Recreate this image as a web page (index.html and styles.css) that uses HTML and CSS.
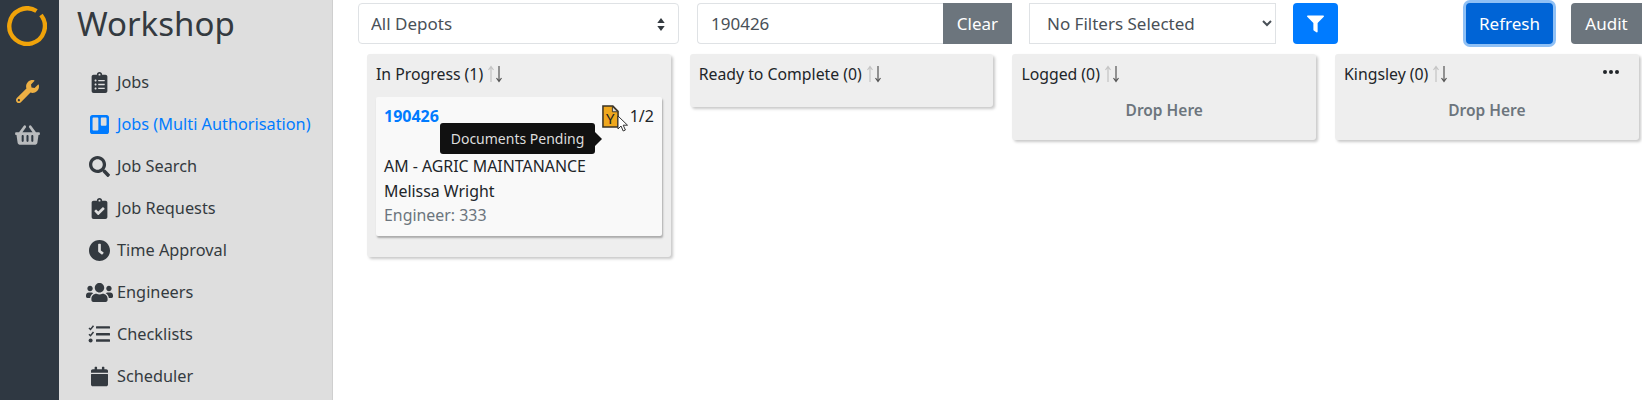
FILE: index.html
```html
<!DOCTYPE html>
<html lang="en">
<head>
<meta charset="utf-8">
<title>Workshop</title>
<link rel="stylesheet" href="styles.css">
</head>
<body>
<div class="app">
  <aside class="rail">
    <svg class="logo" viewBox="0 0 40 40"><path d="M29.500 5A17.800 17.800 0 1 0 34 9" fill="none" stroke="#f0a30a" stroke-width="4.400"/></svg>
    <svg class="rail-wrench" viewBox="0 0 512 512"><path d="M507.73 109.1c-2.24-9.03-13.54-12.09-20.12-5.51l-74.36 74.36-67.88-11.31-11.31-67.88 74.36-74.36c6.62-6.62 3.43-17.9-5.66-20.16-47.38-11.74-99.55.91-136.58 37.93-39.64 39.64-50.55 97.1-34.05 147.2L18.74 402.76c-24.99 24.99-24.99 65.51 0 90.5 24.99 24.99 65.51 24.99 90.5 0l213.21-213.21c50.12 16.71 107.47 5.68 147.37-34.22 37.07-37.07 49.7-89.32 37.91-136.73zM64 472c-13.25 0-24-10.75-24-24 0-13.26 10.75-24 24-24s24 10.74 24 24c0 13.25-10.75 24-24 24z"/></svg>
    <svg class="rail-basket" viewBox="0 0 576 512"><path d="M576 216v16c0 13.255-10.745 24-24 24h-8l-26.113 182.788C514.509 462.435 494.257 480 470.37 480H105.63c-23.887 0-44.139-17.565-47.518-41.212L32 256h-8c-13.255 0-24-10.745-24-24v-16c0-13.255 10.745-24 24-24h67.341l106.78-146.821c10.395-14.292 30.407-17.453 44.701-7.058 14.293 10.395 17.453 30.408 7.058 44.701L170.477 192h235.046L326.12 82.821c-10.395-14.292-7.234-34.306 7.059-44.701 14.291-10.395 34.306-7.235 44.701 7.058L484.659 192H552c13.255 0 24 10.745 24 24zM312 392V280c0-13.255-10.745-24-24-24s-24 10.745-24 24v112c0 13.255 10.745 24 24 24s24-10.745 24-24zm112 0V280c0-13.255-10.745-24-24-24s-24 10.745-24 24v112c0 13.255 10.745 24 24 24s24-10.745 24-24zm-224 0V280c0-13.255-10.745-24-24-24s-24 10.745-24 24v112c0 13.255 10.745 24 24 24s24-10.745 24-24z"/></svg>
  </aside>

  <nav class="sidebar">
    <h1 class="title">Workshop</h1>
    <ul class="menu">
      <li class="item"><span class="ico"><svg class="i-clip" viewBox="0 0 384 512"><path d="M336 64h-80c0-35.3-28.7-64-64-64s-64 28.7-64 64H48C21.5 64 0 85.5 0 112v352c0 26.5 21.5 48 48 48h288c26.5 0 48-21.5 48-48V112c0-26.5-21.5-48-48-48zM96 424c-13.3 0-24-10.7-24-24s10.7-24 24-24 24 10.7 24 24-10.7 24-24 24zm0-96c-13.3 0-24-10.7-24-24s10.7-24 24-24 24 10.7 24 24-10.7 24-24 24zm0-96c-13.3 0-24-10.7-24-24s10.7-24 24-24 24 10.7 24 24-10.7 24-24 24zm96-192c13.3 0 24 10.7 24 24s-10.7 24-24 24-24-10.7-24-24 10.7-24 24-24zm128 368c0 4.4-3.6 8-8 8H168c-4.4 0-8-3.6-8-8v-16c0-4.4 3.6-8 8-8h144c4.4 0 8 3.6 8 8v16zm0-96c0 4.4-3.6 8-8 8H168c-4.4 0-8-3.6-8-8v-16c0-4.4 3.6-8 8-8h144c4.4 0 8 3.6 8 8v16zm0-96c0 4.4-3.6 8-8 8H168c-4.4 0-8-3.6-8-8v-16c0-4.4 3.6-8 8-8h144c4.4 0 8 3.6 8 8v16z"/></svg></span>Jobs</li>
      <li class="item active"><span class="ico"><svg class="i-trello" viewBox="0 32 448 448"><path d="M392.3 32H56.1C25.1 32 0 57.1 0 88c-.1 0 0-4 0 336 0 30.9 25.1 56 56 56h336.2c30.8-.2 55.7-25.2 55.7-56V88c.1-30.8-24.8-55.8-55.6-56zM197 371.3c-.2 14.7-12.1 26.6-26.9 26.6H87.4c-14.8.1-26.9-11.8-27-26.6V117.1c0-14.8 12-26.9 26.9-26.9h82.9c14.8 0 26.9 12 26.9 26.9v254.2zm193.1-112c0 14.8-12 26.9-26.9 26.9h-81c-14.8 0-26.9-12-26.9-26.9V117.2c0-14.8 12-26.9 26.8-26.9h81.1c14.8 0 26.9 12 26.9 26.9v142.1z"/></svg></span>Jobs (Multi Authorisation)</li>
      <li class="item"><span class="ico"><svg class="i-round" viewBox="0 0 512 512"><path d="M505 442.7L405.3 343c-4.5-4.5-10.6-7-17-7H372c27.6-35.3 44-79.7 44-128C416 93.1 322.9 0 208 0S0 93.1 0 208s93.1 208 208 208c48.3 0 92.7-16.4 128-44v16.3c0 6.4 2.5 12.5 7 17l99.7 99.7c9.4 9.4 24.6 9.4 33.9 0l28.3-28.3c9.4-9.4 9.4-24.6.1-34zM208 336c-70.7 0-128-57.2-128-128 0-70.7 57.2-128 128-128 70.7 0 128 57.2 128 128 0 70.7-57.2 128-128 128z"/></svg></span>Job Search</li>
      <li class="item"><span class="ico"><svg class="i-clip" viewBox="0 0 384 512"><path d="M336 64h-80c0-35.3-28.7-64-64-64s-64 28.7-64 64H48C21.5 64 0 85.5 0 112v352c0 26.5 21.5 48 48 48h288c26.5 0 48-21.5 48-48V112c0-26.5-21.5-48-48-48zM192 40c13.3 0 24 10.7 24 24s-10.7 24-24 24-24-10.7-24-24 10.7-24 24-24zm121.2 231.8l-143 141.8c-4.7 4.7-12.3 4.6-17-.1l-82.6-83.3c-4.7-4.7-4.6-12.3.1-17L99.1 285c4.7-4.7 12.3-4.6 17 .1l46 46.4 106-105.2c4.7-4.7 12.3-4.6 17 .1l28.2 28.4c4.7 4.8 4.6 12.3-.1 17z"/></svg></span>Job Requests</li>
      <li class="item"><span class="ico"><svg class="i-round" viewBox="8 8 496 496"><path d="M256,8C119,8,8,119,8,256S119,504,256,504,504,393,504,256,393,8,256,8Zm92.49,313h0l-20,25a16,16,0,0,1-22.49,2.5h0l-67-49.72a40,40,0,0,1-15-31.23V112a16,16,0,0,1,16-16h32a16,16,0,0,1,16,16V256l58,42.5A16,16,0,0,1,348.49,321Z"/></svg></span>Time Approval</li>
      <li class="item"><span class="ico"><svg class="i-users" viewBox="0 32 640 448"><path d="M96 224c35.3 0 64-28.7 64-64s-28.7-64-64-64-64 28.7-64 64 28.7 64 64 64zm448 0c35.3 0 64-28.7 64-64s-28.7-64-64-64-64 28.7-64 64 28.7 64 64 64zm32 32h-64c-17.6 0-33.5 7.1-45.1 18.6 40.3 22.1 68.9 62 75.1 109.4h66c17.7 0 32-14.3 32-32v-32c0-35.3-28.7-64-64-64zm-256 0c61.9 0 112-50.1 112-112S381.9 32 320 32 208 82.1 208 144s50.1 112 112 112zm76.8 32h-8.3c-20.8 10-43.9 16-68.5 16s-47.6-6-68.5-16h-8.3C179.6 288 128 339.6 128 403.2V432c0 26.5 21.5 48 48 48h288c26.5 0 48-21.5 48-48v-28.8c0-63.6-51.6-115.2-115.2-115.2zm-223.7-13.4C161.5 263.1 145.6 256 128 256H64c-35.3 0-64 28.7-64 64v32c0 17.7 14.3 32 32 32h65.9c6.3-47.4 34.9-87.3 75.2-109.4z"/></svg></span>Engineers</li>
      <li class="item"><span class="ico"><svg class="i-tasks" viewBox="0 0 22 18"><path d="M1 3l1.500 1.500L5.500.8M1 9.200l1.500 1.500 3-3.700" fill="none" stroke="currentColor" stroke-width="1.500"/><circle cx="2.600" cy="15.500" r="2"/><rect x="8" y="1.200" width="14" height="2.400" rx=".5"/><rect x="8" y="8" width="14" height="2.400" rx=".5"/><rect x="8" y="14.300" width="14" height="2.400" rx=".5"/></svg></span>Checklists</li>
      <li class="item"><span class="ico"><svg class="i-clip" viewBox="0 0 448 512"><path d="M12 192h424c6.6 0 12 5.4 12 12v260c0 26.5-21.5 48-48 48H48c-26.5 0-48-21.5-48-48V204c0-6.6 5.4-12 12-12zm436-44v-36c0-26.5-21.5-48-48-48h-48V12c0-6.6-5.4-12-12-12h-40c-6.6 0-12 5.4-12 12v52H160V12c0-6.6-5.4-12-12-12h-40c-6.6 0-12 5.4-12 12v52H48C21.5 64 0 85.5 0 112v36c0 6.6 5.4 12 12 12h424c6.6 0 12-5.4 12-12z"/></svg></span>Scheduler</li>
    </ul>
  </nav>

  <main class="main">
    <div class="toolbar">
      <div class="select-wrap">
        <select class="field depot"><option>All Depots</option></select>
        <svg class="updown" viewBox="0 0 10 14"><path d="M5 0l4 5.400H1zM5 14L1 8.600h8z"/></svg>
      </div>
      <div class="search">
        <input class="field search-input" type="text" value="190426">
        <button class="btn grey square">Clear</button>
      </div>
      <select class="field filters"><option>No Filters Selected</option></select>
      <button class="btn blue icon-btn"><svg class="i-filter" viewBox="0 0 512 512"><path d="M487.976 0H24.028C2.71 0-8.047 25.866 7.058 40.971L192 225.941V432c0 7.831 3.821 15.17 10.237 19.662l80 55.98C298.02 518.69 320 507.493 320 487.98V225.941l184.947-184.97C520.021 25.896 509.338 0 487.976 0z"/></svg></button>
      <button class="btn refresh">Refresh</button>
      <button class="btn grey audit">Audit</button>
    </div>

    <div class="board">
      <section class="column first">
        <header class="col-head">In Progress (1)<svg class="sort" viewBox="0 0 18 18"><path class="up" d="M5 17V2M2.500 5L5 1.500 7.500 5"/><path class="down" d="M13 1v15M10.500 13l2.500 3.500 2.500-3.500"/></svg></header>
        <article class="card">
          <div class="card-top">
            <a class="job-no">190426</a>
            <span class="doc-wrap">
              <svg class="doc" viewBox="0 0 18 24"><path d="M1 1h10.500L17 6.500V23H1z" fill="#f0a81e" stroke="#3a3326" stroke-width="1.600"/><path d="M11 1.500V7h5.500z" fill="#ddd" stroke="#3a3326"/></svg>
              <span class="doc-letter">Y</span>
            </span>
            <span class="ratio">1/2</span>
          </div>
          <p class="line lead">AM - AGRIC MAINTANANCE</p>
          <p class="line">Melissa Wright</p>
          <p class="line muted">Engineer: 333</p>
          <div class="tooltip">Documents Pending</div>
          <svg class="cursor" viewBox="0 0 12 18"><path d="M1 1v13l3-3 2.200 5 2.200-1-2.200-4.800h4.300z" fill="#fff" stroke="#333" stroke-width="1"/></svg>
        </article>
      </section>
      <section class="column short">
        <header class="col-head">Ready to Complete (0)<svg class="sort" viewBox="0 0 18 18"><path class="up" d="M5 17V2M2.500 5L5 1.500 7.500 5"/><path class="down" d="M13 1v15M10.500 13l2.500 3.500 2.500-3.500"/></svg></header>
      </section>
      <section class="column">
        <header class="col-head">Logged (0)<svg class="sort" viewBox="0 0 18 18"><path class="up" d="M5 17V2M2.500 5L5 1.500 7.500 5"/><path class="down" d="M13 1v15M10.500 13l2.500 3.500 2.500-3.500"/></svg></header>
        <div class="drop">Drop Here</div>
      </section>
      <section class="column">
        <header class="col-head">Kingsley (0)<svg class="sort" viewBox="0 0 18 18"><path class="up" d="M5 17V2M2.500 5L5 1.500 7.500 5"/><path class="down" d="M13 1v15M10.500 13l2.500 3.500 2.500-3.500"/></svg><svg class="dots" viewBox="0 0 16 4"><circle cx="2" cy="2" r="2"/><circle cx="8" cy="2" r="2"/><circle cx="14" cy="2" r="2"/></svg></header>
        <div class="drop">Drop Here</div>
      </section>
    </div>
  </main>
</div>
</body>
</html>
```
FILE: styles.css
```css
* { box-sizing: border-box; }
html, body { margin: 0; height: 400px; overflow: hidden; background: #fff; }
body { font-family: "Noto Sans", "Open Sans", sans-serif; font-size: 16px; color: #212529; }
.app { display: flex; height: 400px; }

.rail { width: 59px; flex: none; background: #2f3842; display: flex; flex-direction: column; align-items: center; padding-right: 5px; }
.logo { width: 40px; height: 40px; margin-top: 6px; }
.rail-wrench { width: 23px; height: 23px; margin-top: 34px; fill: #eeb044; }
.rail-basket { width: 25px; height: 22px; margin-top: 21px; fill: #b9bbbd; }

.sidebar { width: 274px; flex: none; background: #dedede; border-right: 1px solid #cfcfcf; }
.title { margin: 0 0 13px 18px; height: 48px; font-size: 33px; font-weight: 400; line-height: 48px; color: #343a40; }
.menu { list-style: none; margin: 0; padding: 0 0 0 25px; }
.item { display: flex; align-items: center; height: 42px; font-size: 16.3px; color: #343a40; white-space: nowrap; }
.item.active { color: #007bff; }
.ico { width: 30px; margin-right: 3px; display: flex; justify-content: center; fill: #343a40; color: #343a40; }
.active .ico { fill: #007bff; }
.i-clip { width: 17px; height: 21px; }
.i-trello { width: 19px; height: 19px; }
.i-round { width: 21px; height: 21px; }
.i-users { width: 27px; height: 19px; }
.i-tasks { width: 22px; height: 18px; }

.main { flex: 1; min-width: 0; padding: 3px 0 0 25px; }
.toolbar { display: flex; align-items: stretch; height: 41px; }
.field { height: 41px; font: inherit; font-size: 17px; color: #495057; background: #fff; border: 1px solid #dfe2e5; outline: 0; }
.select-wrap { position: relative; width: 321px; flex: none; }
.depot { width: 100%; appearance: none; -webkit-appearance: none; border-radius: 4px; padding: 0 12px; }
.updown { position: absolute; right: 13px; top: 15px; width: 10px; height: 13px; fill: #343a40; }
.search { display: flex; width: 315px; margin-left: 18px; flex: none; }
.search-input { flex: 1; min-width: 0; border-right: 0; border-radius: 4px 0 0 4px; padding: 0 13px; }
.filters { width: 247px; margin-left: 17px; flex: none; padding-left: 13px; border-radius: 0; }
.btn { border: 0; font: inherit; font-size: 17px; color: #fff; border-radius: 4px; padding: 0; }
.grey { background: #6c757d; }
.blue { background: #007bff; }
.square { width: 69px; border-radius: 0; }
.icon-btn { width: 45px; margin-left: 17px; display: flex; align-items: center; justify-content: center; }
.i-filter { width: 17px; height: 18px; fill: #fff; }
.refresh { width: 87px; margin-left: auto; margin-right: 18px; background: #0064d6; box-shadow: 0 0 0 3px #8fc0f5; }
.audit { width: 71px; border-radius: 4px 0 0 4px; }

.board { display: flex; align-items: flex-start; gap: 19px; margin: 10px 0 0 9px; }
.column { width: 303.7px; flex: none; min-height: 86px; background: #eee; border-radius: 3px; box-shadow: 2px 2px 3px #c9c9c9; }
.column.short { min-height: 53px; }
.column.first { min-height: 203px; }
.col-head { display: flex; align-items: center; height: 43px; padding: 0 8px 4px 9px; font-size: 15.8px; color: #212529; }
.sort { width: 18px; height: 18px; margin-left: 3px; fill: none; stroke-width: 1.200; }
.up { stroke: #c4c4c4; }
.down { stroke: #555; }
.dots { width: 16px; height: 4px; margin: -4px 12px 0 auto; fill: #212529; }
.drop { text-align: center; font-size: 15.5px; font-weight: 600; color: #6c757d; margin-top: 2px; }

.card { position: relative; margin: 0 9px; height: 139px; background: #f9f9f9; border-radius: 2px; box-shadow: 1px 2px 2px #aaa; padding: 8px 8px 0; }
.card-top { display: flex; align-items: center; height: 22px; }
.job-no { font-size: 16px; font-weight: 700; color: #007bff; }
.doc-wrap { position: relative; margin-left: auto; width: 17px; height: 23px; }
.doc { display: block; width: 17px; height: 23px; }
.doc-letter { position: absolute; left: 0; right: 0; top: 3px; text-align: center; font-size: 15px; line-height: 20px; color: #222; }
.ratio { margin-left: 11px; width: 24px; }
.line { margin: 0; height: 24.500px; line-height: 24.500px; font-size: 15.900px; }
.lead { margin-top: 27px; }
.muted { color: #6c757d; }
.tooltip { position: absolute; left: 64px; top: 26px; width: 155px; height: 31px; background: #111; color: #ddd; border-radius: 3px; font-size: 14px; line-height: 31px; text-align: center; }
.tooltip::after { content: ""; position: absolute; left: 100%; top: 9px; border: 7px solid transparent; border-left-color: #111; border-right: 0; }
.cursor { position: absolute; left: 241px; top: 18px; width: 12px; height: 18px; }
```
